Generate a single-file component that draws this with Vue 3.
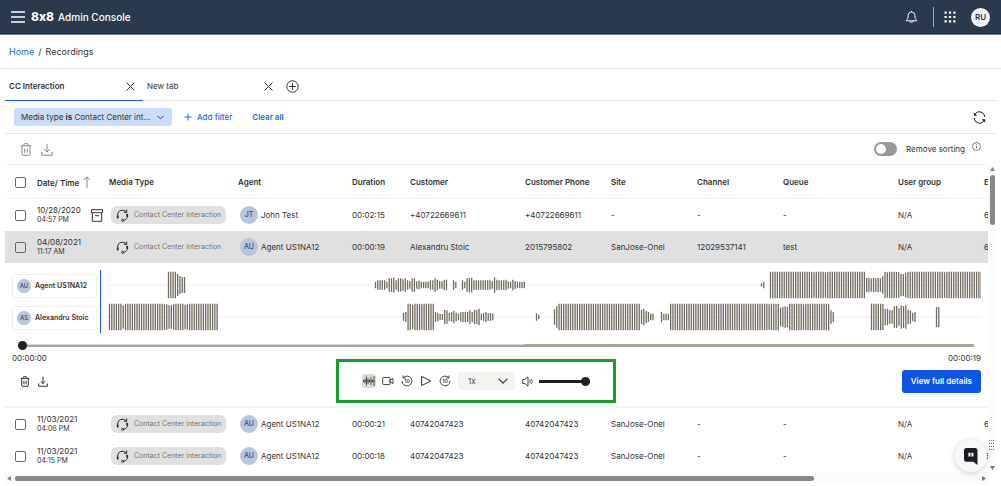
<script setup>
import { ref } from 'vue'

const columns = [
  { key: 'date', label: 'Date/ Time', cls: 'c-date' },
  { key: 'media', label: 'Media Type', cls: 'c-media' },
  { key: 'agent', label: 'Agent', cls: 'c-agent' },
  { key: 'duration', label: 'Duration', cls: 'c-duration' },
  { key: 'customer', label: 'Customer', cls: 'c-wide' },
  { key: 'phone', label: 'Customer Phone', cls: 'c-std' },
  { key: 'site', label: 'Site', cls: 'c-std' },
  { key: 'channel', label: 'Channel', cls: 'c-std' },
  { key: 'queue', label: 'Queue', cls: 'c-wide' },
  { key: 'group', label: 'User group', cls: 'c-std' },
  { key: 'ext', label: 'E', cls: 'c-std' },
]
const plain = ['duration', 'customer', 'phone', 'site', 'channel', 'queue', 'group', 'ext']

const rows = [
  { id: 1, day: '10/28/2020', time: '04:57 PM', archived: true, initials: 'JT', agent: 'John Test', duration: '00:02:15', customer: '+40722669611', phone: '+40722669611', site: '-', channel: '-', queue: '-', group: 'N/A', ext: '6' },
  { id: 2, day: '04/08/2021', time: '11:17 AM', open: true, initials: 'AU', agent: 'Agent US1NA12', duration: '00:00:19', customer: 'Alexandru Stoic', phone: '2015795802', site: 'SanJose-Onel', channel: '12029537141', queue: 'test', group: 'N/A', ext: '6' },
  { id: 3, day: '11/03/2021', time: '04:06 PM', initials: 'AU', agent: 'Agent US1NA12', duration: '00:00:21', customer: '40742047423', phone: '40742047423', site: 'SanJose-Onel', channel: '-', queue: '-', group: 'N/A', ext: '6' },
  { id: 4, day: '11/03/2021', time: '04:15 PM', initials: 'AU', agent: 'Agent US1NA12', duration: '00:00:18', customer: '40742047423', phone: '40742047423', site: 'SanJose-Onel', channel: '-', queue: '-', group: 'N/A', ext: '6' },
]

const full = (n) => Array(n).fill(80)

// Each segment: start offset in the lane, then bar heights (80 = full lane).
const lanes = [
  {
    initials: 'AU', name: 'Agent US1NA12',
    segments: [
      [67, [80, 80, 80, 80, 66, 54, 48, 48]],
      [274, [20, 28, 28, 28, 28, 20, 40, 40, 45, 28, 40, 40, 34, 40, 28, 22, 40, 40, 22, 27, 20, 20, 20, 20, 28, 28, 40, 32, 22, 22, 32, 32]],
      [352, [28, 20]],
      [361, [28, 20, 40, 44, 44, 28, 28, 28, 28, 28, 28, 28, 28, 22, 46, 32, 28, 28, 28, 32, 22, 20, 32, 24, 20, 20, 18, 20]],
      [660, [10, 20]],
      [669, [...full(19), 76, ...full(4), 76, ...full(17), 44, 44, 40, 44, 40, 44, 40, 52, 80, 76, 80, 80, 80, 78, 76, 68, 66, 74, ...full(16), 76, ...full(16)]],
    ],
  },
  {
    initials: 'AS', name: 'Alexandru Stoic',
    segments: [
      [8, [...full(6), 70, ...full(17), 76, 76, 70, 70, 76, ...full(4), 74, 76, ...full(13)]],
      [302, [22, 30, 80, 80, 74, 80, 80, 80, 76, 80, 80, 80, 80, 80, 30, 26, 18, 18, 42, 40, 24, 28, 38, 26, 20, 28, 30, 32, 30, 42, 30, 42, 42, 50, 20, 24, 30, 22, 24, 20]],
      [435, [22, 14]],
      [453, [46, 64, ...full(36), 44, 50, 36, 30, 20, 20]],
      [560, [32, 20, 20, 20, ...full(43), 76, ...full(4), 56, 60, 64, 60, ...full(6), 76, ...full(11), 40, 30]],
      [770, [80, 80, 80, 80, 80, 78, 50, 50, 40, 40, 64, 66, 52, 70, 66, 70, 44, 40, 26, 30]],
      [835, [60, 60]],
    ],
  },
]
const STEP = 2.29
function lanePath(segments) {
  let d = ''
  for (const [start, heights] of segments) {
    heights.forEach((h, i) => {
      const half = h / 6
      const x = (start + i * STEP + 0.5).toFixed(2)
      d += `M${x} ${(14 - half).toFixed(1)}V${(14 + half).toFixed(1)}`
    })
  }
  return d
}

const position = ref(0)
const volume = ref(100)
const speed = ref('1x')
const sorting = ref(false)
</script>

<template>
  <div class="app">
    <header class="topbar">
      <button class="icon-btn" aria-label="Menu">
        <svg width="14" height="12" viewBox="0 0 14 12" stroke="#fff" stroke-width="1.4"><path d="M0 1h14M0 6h14M0 11h14" /></svg>
      </button>
      <span class="logo">8x8</span>
      <span class="product">Admin Console</span>
      <button class="icon-btn bell" aria-label="Notifications">
        <svg width="13" height="14" viewBox="0 0 13 14" fill="none" stroke="#fff"><path d="M6.5 2C4.400 2 3.100 3.500 3.100 5.600c0 2.500-.5 3.600-1.800 4.600v.6h10.400v-.6c-1.300-1-1.800-2.100-1.800-4.600C9.900 3.500 8.600 2 6.500 2zM6.500 2V1M5 11c.1.9.7 1.500 1.500 1.500S7.900 11.900 8 11" /></svg>
      </button>
      <span class="bar-divider"></span>
      <button class="icon-btn apps" aria-label="Apps">
        <svg width="12" height="12" viewBox="0 0 12 12" fill="#fff"><path d="M.5.5h2.200v2.200H.5zM4.900.5h2.200v2.200H4.900zM9.300.5h2.200v2.200H9.300zM.5 4.900h2.200v2.200H.5zM4.900 4.900h2.200v2.200H4.900zM9.300 4.900h2.200v2.200H9.300zM.5 9.300h2.200v2.200H.5zM4.900 9.300h2.200v2.200H4.900zM9.300 9.300h2.200v2.200H9.300z" /></svg>
      </button>
      <button class="user">RU</button>
    </header>

    <nav class="crumbs" aria-label="Breadcrumb">
      <a href="#">Home</a><span>/</span><span>Recordings</span>
    </nav>

    <main class="page">
      <div class="tabs">
        <div class="tab active">
          <button class="tab-name">CC Interaction</button>
          <button class="icon-btn" aria-label="Close CC Interaction">
            <svg width="9" height="9" viewBox="0 0 9 9" stroke="#333"><path d="M.5.5l8 8M8.5.5l-8 8" /></svg>
          </button>
        </div>
        <div class="tab">
          <button class="tab-name">New tab</button>
          <button class="icon-btn" aria-label="Close New tab">
            <svg width="9" height="9" viewBox="0 0 9 9" stroke="#333"><path d="M.5.5l8 8M8.5.5l-8 8" /></svg>
          </button>
        </div>
        <button class="icon-btn add-tab" aria-label="Add tab">
          <svg width="13" height="13" viewBox="0 0 13 13" fill="none" stroke="#333"><circle cx="6.5" cy="6.5" r="5.7" /><path d="M6.5 3.2v6.600M3.200 6.500h6.600" /></svg>
        </button>
      </div>

      <div class="filters">
        <button class="chip">
          <span>Media type <b>is</b> Contact Center int...</span>
          <svg width="7" height="5" viewBox="0 0 7 5" fill="none" stroke="#3c4654"><path d="M.5.8l3 3 3-3" /></svg>
        </button>
        <button class="link add-filter">
          <svg width="8" height="8" viewBox="0 0 8 8" stroke="#2a6be0"><path d="M4 .5v7M.5 4h7" /></svg>
          Add filter
        </button>
        <button class="link clear">Clear all</button>
        <button class="icon-btn refresh" aria-label="Refresh">
          <svg width="13" height="13" viewBox="0 0 13 13" fill="none" stroke="#222"><path d="M1.800 3.700A5.300 5.300 0 0 1 11.800 6M11.200 9.300A5.300 5.300 0 0 1 1.200 7" /><path d="M.8 1.300v3.400h3.400zM12.200 11.700V8.300H8.800z" fill="#222" stroke="none" /></svg>
        </button>
      </div>

      <div class="toolbar">
        <button class="icon-btn" aria-label="Delete selected">
          <svg width="12" height="13" viewBox="0 0 12 13" fill="none" stroke="#858585"><path d="M.8 2.800h10.400M3.800 2.600V1.700q0-1 1-1h2.400q1 0 1 1v.9M2 3v7.800q0 1.500 1.500 1.500h5q1.500 0 1.500-1.500V3M4.700 5.500v4.300M7.300 5.500v4.300" /></svg>
        </button>
        <button class="icon-btn" aria-label="Download selected">
          <svg width="12" height="13" viewBox="0 0 12 13" fill="none" stroke="#858585"><path d="M6 .8v8M3.200 6.300L6 9l2.800-2.700M.8 8.800v3.400h10.400V8.800" /></svg>
        </button>
        <label class="switch"><input v-model="sorting" type="checkbox" role="switch" />Remove sorting</label>
        <button class="icon-btn info" aria-label="About sorting">
          <svg width="9" height="9" viewBox="0 0 9 9" fill="none" stroke="#555" stroke-width=".8"><circle cx="4.5" cy="4.5" r="4" /><path d="M4.500 4v2.600M4.500 2.300v.9" /></svg>
        </button>
      </div>

      <div class="grid">
        <div class="viewport">
          <table>
            <colgroup>
              <col class="c-check" />
              <col v-for="c in columns" :key="c.key" :class="c.cls" />
            </colgroup>
            <thead>
              <tr>
                <th class="check"><input type="checkbox" aria-label="Select all recordings" /></th>
                <th v-for="c in columns" :key="c.key" scope="col">
                  <span>{{ c.label }}</span>
                  <svg v-if="c.key === 'date'" class="sort" width="8" height="12" viewBox="0 0 8 12" fill="none" stroke="#777" stroke-width=".9"><path d="M4 12V1M1 3.800L4 .8l3 3" /></svg>
                </th>
              </tr>
            </thead>
            <tbody>
              <template v-for="r in rows" :key="r.id">
                <tr class="row" :class="{ open: r.open }">
                  <td class="check"><input type="checkbox" :aria-label="'Select recording ' + r.day + ' ' + r.time" /></td>
                  <td>
                    <div class="when">
                      <div><div class="day">{{ r.day }}</div><div class="time">{{ r.time }}</div></div>
                      <svg v-if="r.archived" width="12" height="13" viewBox="0 0 12 13" fill="none" stroke="#333"><path d="M.5.7h11v3H.5zM1.300 3.700v8.600h9.400V3.700M4 6.700h4" /></svg>
                    </div>
                  </td>
                  <td>
                    <span class="media">
                      <svg width="13" height="13" viewBox="0 0 13 13" fill="none" stroke="#2b2b2b"><path d="M1.600 6.500C1.600 3 3.600 1.300 6.300 1.300c1.600 0 2.700.4 3.700 1.300M11.400 5.500c.5 2.300-.2 4-1.700 5l-1.900.9" /><path d="M1.700 6.400v3" stroke-width="1.8" /><path d="M11.200 4.800v3" stroke-width="1.800" /><path d="M10.700.5v2.800H8" /><circle cx="6.700" cy="11.300" r="1.100" /></svg>
                      Contact Center interaction
                    </span>
                  </td>
                  <td><div class="person"><span class="avatar">{{ r.initials }}</span>{{ r.agent }}</div></td>
                  <td v-for="k in plain" :key="k">{{ r[k] }}</td>
                </tr>
                <tr v-if="r.open">
                  <td class="detail-cell" :colspan="columns.length + 1">
                    <section class="detail" aria-label="Recording player">
                      <div class="tracks">
                        <div class="speakers">
                          <div v-for="l in lanes" :key="l.initials" class="speaker"><span class="avatar small">{{ l.initials }}</span>{{ l.name }}</div>
                        </div>
                        <div class="waves">
                          <svg v-for="l in lanes" :key="l.initials" class="wave" viewBox="0 0 880 28" preserveAspectRatio="none" fill="none">
                            <path d="M0 14H880" stroke="#f1efe8" />
                            <path :d="lanePath(l.segments)" stroke="#716b62" stroke-width="1.3" />
                          </svg>
                        </div>
                      </div>
                      <input v-model="position" class="seek" type="range" min="0" max="19" aria-label="Position" />
                      <div class="times"><span>00:00:00</span><span>00:00:19</span></div>
                      <div class="actions">
                        <div class="left">
                          <button class="icon-btn" aria-label="Delete recording">
                            <svg width="10" height="11" viewBox="0 0 12 13" fill="none" stroke="#333" stroke-width="1.2"><path d="M.8 2.800h10.400M3.800 2.600V1.700q0-1 1-1h2.400q1 0 1 1v.9M2 3v7.800q0 1.500 1.500 1.500h5q1.500 0 1.500-1.500V3M4.700 5.500v4.300M7.300 5.500v4.300" /></svg>
                          </button>
                          <button class="icon-btn" aria-label="Download recording">
                            <svg width="10" height="11" viewBox="0 0 12 13" fill="none" stroke="#333" stroke-width="1.2"><path d="M6 .8v8M3.200 6.300L6 9l2.800-2.700M.8 8.800v3.400h10.400V8.800" /></svg>
                          </button>
                        </div>
                        <div class="player">
                          <button class="icon-btn wave-btn" aria-label="Waveform">
                            <svg width="12" height="12" viewBox="0 0 12 12" stroke="#444" stroke-width=".9"><path d="M.5 5v2M2 3.500v5M3.500 1.500v9M5 3v6M6.500 4.500v3M8 2v8M9.500 4.500v3M11 1v10M0 6h12" /></svg>
                          </button>
                          <button class="icon-btn" aria-label="Video">
                            <svg width="12" height="10" viewBox="0 0 12 10" fill="none" stroke="#333" stroke-width=".9"><rect x=".7" y="1.500" width="7.300" height="7" rx="1" /><path d="M8 4.200l3-1.800v5.200l-3-1.800z" /></svg>
                          </button>
                          <button class="icon-btn" aria-label="Back 10 seconds">
                            <svg width="12" height="12" viewBox="0 0 12 12" fill="none" stroke="#333" stroke-width=".9"><path d="M2.300 2.800A4.900 4.900 0 1 1 1.100 6M4.800 2.900H2V.5" /><text class="ten" x="6" y="7.900" text-anchor="middle">10</text></svg>
                          </button>
                          <button class="icon-btn play" aria-label="Play">
                            <svg width="12" height="12" viewBox="0 0 12 12" fill="none" stroke="#333"><path d="M1.600 1.400L10.800 6l-9.200 4.600z" stroke-linejoin="round" /></svg>
                          </button>
                          <button class="icon-btn" aria-label="Forward 10 seconds">
                            <svg width="12" height="12" viewBox="0 0 12 12" fill="none" stroke="#333" stroke-width=".9"><path d="M9.700 2.800A4.900 4.900 0 1 0 10.900 6M7.200 2.900H10V.5" /><text class="ten" x="6" y="7.900" text-anchor="middle">10</text></svg>
                          </button>
                          <div class="speed">
                            <select v-model="speed" aria-label="Playback speed"><option>1x</option><option>2x</option></select>
                            <svg width="10" height="6" viewBox="0 0 10 6" fill="none" stroke="#333" stroke-width="1.1"><path d="M.5.7L5 5.200 9.500.7" /></svg>
                          </div>
                          <button class="icon-btn" aria-label="Mute">
                            <svg width="12" height="11" viewBox="0 0 12 11" fill="none" stroke="#333" stroke-width=".9"><path d="M.7 3.500h2L6 .9v9.200L2.700 7.500h-2zM8 3.700v3.600M9.500 3.200q1.700 2.300 0 4.600" /></svg>
                          </button>
                          <input v-model="volume" class="volume" type="range" aria-label="Volume" />
                        </div>
                        <button class="primary">View full details</button>
                      </div>
                    </section>
                  </td>
                </tr>
              </template>
            </tbody>
          </table>
        </div>
        <div class="vbar" aria-hidden="true">
          <svg width="5" height="4" viewBox="0 0 5 4" fill="#858585"><path d="M2.500 0L5 4H0z" /></svg>
          <span class="vthumb"></span>
          <svg class="grip" width="6" height="10" viewBox="0 0 6 10" fill="#777"><path d="M0 0h1v1H0zM2 0h1v1H2zM4 0h1v1H4zM0 3h1v1H0zM2 3h1v1H2zM4 3h1v1H4zM0 6h1v1H0zM2 6h1v1H2zM4 6h1v1H4zM0 9h1v1H0zM2 9h1v1H2zM4 9h1v1H4z" /></svg>
          <svg class="down" width="5" height="4" viewBox="0 0 5 4" fill="#777"><path d="M2.500 4L0 0h5z" /></svg>
        </div>
        <div class="hbar" aria-hidden="true">
          <svg width="4" height="5" viewBox="0 0 4 5" fill="#858585"><path d="M0 2.500L4 0v5z" /></svg>
          <span class="hrail"><span class="hthumb"></span></span>
          <svg width="4" height="5" viewBox="0 0 4 5" fill="#777"><path d="M4 2.500L0 0v5z" /></svg>
        </div>
      </div>
    </main>

    <button class="chat" aria-label="Open chat">
      <svg width="16" height="19" viewBox="0 0 16 19"><path d="M3.500 1H12q2.500 0 2.500 2.500V18l-4.300-3.300H3.500Q1 14.700 1 12.200V3.500Q1 1 3.500 1z" fill="#1c1d22" /><path d="M5.400 5.700h2.100v3.800H5.400zM8.400 5.700h2.100v3.800H8.400z" fill="#fff" /></svg>
    </button>
  </div>
</template>

<style>
body {
  background: #fff;
}
</style>

<style scoped>
.app {
  position: relative;
  min-height: 100vh;
  font: 9px/12px Inter, "Liberation Sans", sans-serif;
  color: #333;
  overflow: hidden;
}
button {
  font: inherit;
  color: inherit;
  background: none;
  border: 0;
  padding: 0;
  margin: 0;
  cursor: pointer;
}
input { margin: 0; }
svg { display: block; flex: none; }
.icon-btn { display: flex; align-items: center; justify-content: center; }

.topbar {
  display: flex;
  align-items: center;
  box-sizing: border-box;
  height: 35px;
  padding: 0 11px;
  background: #2a394b;
  border-bottom: 1px solid #75809a;
  box-shadow: inset 0 -1px #18243a;
  color: #fff;
}
.logo { margin-left: 6px; font-size: 12px; font-weight: 800; font-feature-settings: "calt" 0; }
.product { margin-left: 4px; font-size: 10px; font-weight: 500; }
.bell { margin-left: auto; }
.bar-divider { width: 1px; height: 20px; margin: 0 10px 0 15px; background: #9fadc2; }
.user {
  width: 19px;
  height: 19px;
  margin-left: 15px;
  border-radius: 50%;
  background: #f1f3f8;
  color: #2f3540;
  font-size: 8px;
  font-weight: 600;
}

.crumbs {
  display: flex;
  align-items: center;
  gap: 4px;
  height: 33px;
  padding: 0 9px;
  border-bottom: 1px solid #e6e6e6;
}
.crumbs a { color: #1f66e5; text-decoration: none; }

.page { padding: 0 5px; }
.tabs { display: flex; height: 31px; border-bottom: 1px solid #e6e6e6; }
.tab {
  display: flex;
  align-items: center;
  justify-content: space-between;
  width: 126px;
  margin-bottom: -1px;
  padding: 3px 8px 0 4px;
  border-bottom: 1px solid transparent;
  font-size: 8px;
}
.tab.active { border-bottom-color: #1a62e0; font-weight: 600; }
.add-tab { margin: 3px 0 0 5px; }

.filters {
  display: flex;
  align-items: center;
  height: 32px;
  padding: 0 10px 0 9px;
  border-bottom: 1px solid #e6e6e6;
  font-size: 8px;
}
.chip {
  display: flex;
  align-items: center;
  justify-content: space-between;
  width: 158px;
  height: 18px;
  padding: 0 8px 0 7px;
  border-radius: 3px;
  background: #cadcf9;
}
.link { color: #1f66e5; font-weight: 500; }
.add-filter { display: flex; align-items: center; gap: 5px; margin-left: 12px; }
.clear { margin-left: 20px; font-weight: 600; }
.refresh { margin-left: auto; }

.toolbar {
  display: flex;
  align-items: center;
  gap: 9px;
  height: 30px;
  margin-right: 8px;
  padding: 0 7px 0 15px;
  border-bottom: 1px solid #f3f3f3;
  font-size: 8px;
}
.switch { display: flex; align-items: center; gap: 9px; margin-left: auto; }
.switch input {
  appearance: none;
  width: 23px;
  height: 14px;
  padding: 2px;
  border-radius: 7px;
  background: #999;
}
.switch input::before {
  content: "";
  display: block;
  width: 10px;
  height: 10px;
  border-radius: 50%;
  background: #fff;
}
.info { align-self: flex-start; margin: 8px 0 0 -2px; }

.grid { display: grid; grid-template-columns: 1fr 8px; }
.viewport { container-type: inline-size; min-width: 0; overflow: hidden; }
table { width: 1061px; border-collapse: collapse; table-layout: fixed; font-size: 8px; }
.c-check { width: 28px; }
.c-date { width: 72px; }
.c-media { width: 129px; }
.c-agent { width: 114px; }
.c-duration { width: 58px; }
.c-wide { width: 115px; }
.c-std { width: 86px; }
th, td { padding: 0 0 0 4px; text-align: left; white-space: nowrap; }
th { height: 32px; padding-top: 1px; border-bottom: 1px solid #f3f3f3; font-weight: 600; }
.row td { height: 32px; }
.row.open { background: #e0e0e0; }
.row .check, th.check { padding-left: 10px; }
.check input {
  appearance: none;
  display: block;
  box-sizing: border-box;
  width: 11px;
  height: 11px;
  border: 1px solid #666;
  border-radius: 2px;
  background: #fff;
}
.row.open .check input { background: none; }
.sort { display: inline-block; margin-left: 4px; vertical-align: -2px; }
.when { display: flex; align-items: center; justify-content: space-between; padding-right: 2px; }
.day { line-height: 10px; }
.time { font-size: 7px; line-height: 10px; }
.media {
  display: inline-flex;
  align-items: center;
  gap: 5px;
  box-sizing: border-box;
  height: 18px;
  margin-left: 2px;
  padding: 0 5px;
  border-radius: 6px;
  background: #e0e0e0;
  color: #757575;
  font-size: 7px;
  vertical-align: middle;
}
.person { display: flex; align-items: center; gap: 3px; margin-left: 2px; }
.avatar {
  display: flex;
  align-items: center;
  justify-content: center;
  width: 18px;
  height: 18px;
  border-radius: 50%;
  background: #b8c6dd;
  color: #2c4d80;
  font-size: 7px;
  font-weight: 500;
}
.avatar.small { width: 14px; height: 14px; font-size: 6px; }

td.detail-cell { padding: 0; }
.detail {
  box-sizing: border-box;
  width: 100cqw;
  height: 145px;
  padding: 7px 7px 0;
  border-bottom: 2px solid #f3f3f3;
}
.tracks { display: flex; }
.speakers { display: flex; flex-direction: column; justify-content: space-between; width: 85px; margin: 4px 3px 3px 0; }
.speaker {
  display: flex;
  align-items: center;
  gap: 4px;
  box-sizing: border-box;
  height: 24px;
  padding-left: 4px;
  border: 1px solid #f1efe9;
  border-radius: 3px;
  font-size: 7px;
  font-weight: 600;
}
.waves {
  display: flex;
  flex: 1;
  flex-direction: column;
  gap: 4px;
  padding: 1px 0 2px;
  border-left: 1px solid #1a62e0;
}
.wave { width: 100%; height: 28px; }

.seek, .volume { appearance: none; display: block; background: none; height: 9px; }
.seek { width: calc(100% - 13px); margin: 8px 0 0 6px; }
.seek::-webkit-slider-runnable-track {
  height: 3px;
  background: linear-gradient(#cbd9ea, #cbd9ea) 0 0 / 53% 1px no-repeat, #a9a596;
}
.seek::-webkit-slider-thumb, .volume::-webkit-slider-thumb {
  appearance: none;
  width: 9px;
  height: 9px;
  margin-top: -3px;
  border-radius: 50%;
  background: #1f1f27;
}
.times { display: flex; justify-content: space-between; margin-top: 2px; }
.actions { display: flex; align-items: center; justify-content: space-between; margin-top: -5px; }
.left { display: flex; gap: 8px; padding: 0 2px 0 8px; }
.player {
  display: flex;
  align-items: center;
  justify-content: center;
  gap: 7px;
  box-sizing: border-box;
  width: 280px;
  height: 44px;
  border: 3px solid #1b9c2e;
}
.wave-btn { width: 14px; height: 14px; margin-right: -1px; border-radius: 3px; background: #dcdace; }
.ten { font-size: 5px; font-weight: 600; fill: #333; stroke: none; }
.speed { position: relative; }
.speed select {
  appearance: none;
  display: block;
  width: 57px;
  height: 18px;
  padding: 0 10px;
  border: 0;
  border-radius: 3px;
  background: #f4f3ed;
  color: #444;
  font: inherit;
}
.speed svg { position: absolute; top: 6px; right: 7px; pointer-events: none; }
.volume { width: 51px; margin-left: -2px; }
.volume::-webkit-slider-runnable-track { height: 3px; background: #1f1f27; }
.primary {
  height: 23px;
  padding: 0 9px;
  border-radius: 3px;
  background: #0a56e3;
  color: #fff;
  font-size: 8px;
  font-weight: 600;
}

.vbar { display: flex; flex-direction: column; align-items: center; gap: 4px; padding: 2px 0; background: #fbfbfb; }
.vthumb { width: 5px; height: 50px; border-radius: 3px; background: #888; }
.grip { margin-top: auto; }
.down { margin-top: 12px; }
.hbar { display: flex; align-items: center; gap: 4px; height: 12px; padding: 0 2px; background: #fbfbfb; }
.hrail { flex: 1; }
.hthumb { display: block; width: 83%; height: 5px; border-radius: 3px; background: #888; }

.chat {
  position: absolute;
  right: 14px;
  bottom: 14px;
  display: flex;
  align-items: center;
  justify-content: center;
  width: 32px;
  height: 32px;
  border-radius: 50%;
  background: #f8f8f8;
  box-shadow: 0 1px 6px rgba(0, 0, 0, 0.2);
}
</style>
